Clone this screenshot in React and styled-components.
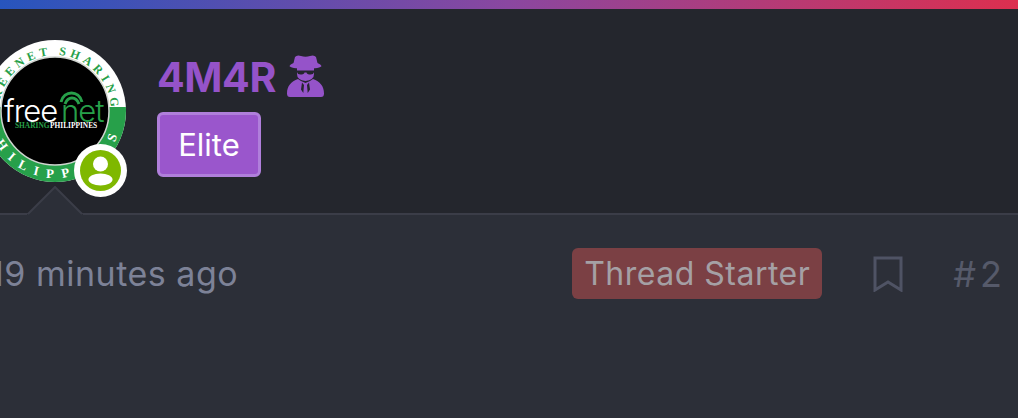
import React from "react";
import styled, { createGlobalStyle } from "styled-components";

const Global = createGlobalStyle`
  html, body { margin: 0; padding: 0; width: 1018px; height: 418px; overflow: hidden; background: #2c2f38; }
  * { box-sizing: border-box; }
`;
const Page = styled.div`
  width: 1018px; height: 418px; overflow: hidden;
  font-family: "Inter", "Open Sans", sans-serif;
  background: #2c2f38;
`;
const TopBar = styled.div`
  height: 9px;
  background: linear-gradient(90deg, #2755bd 0%, #8a47a0 50%, #dc2f4f 100%);
`;
const Header = styled.header`
  position: relative;
  height: 206px;
  background: #24262d;
  border-bottom: 2px solid #3b3d48;
  display: flex;
  align-items: flex-start;
  gap: 31px;
  padding: 31px 0 0 0;
`;
const AvatarWrap = styled.div`
  position: relative;
  flex: none;
  width: 142px;
  height: 142px;
  margin-left: -16px;
`;
const StatusBadge = styled.div`
  position: absolute;
  left: 90px;
  top: 104px;
  width: 53px;
  height: 53px;
  border-radius: 50%;
  background: #fff;
  display: flex;
  align-items: center;
  justify-content: center;
`;
const Caret = styled.svg`
  position: absolute;
  left: 27px;
  bottom: -2px;
  display: block;
`;
const UserInfo = styled.div`
  display: flex;
  flex-direction: column;
  align-items: flex-start;
  gap: 11px;
  padding-top: 14px;
`;
const NameRow = styled.div`
  display: flex;
  align-items: center;
  gap: 11px;
  height: 47px;
`;
const Name = styled.span`
  font-weight: 700;
  font-size: 41px;
  line-height: 47px;
  letter-spacing: -0.4px;
  color: #9553c9;
`;
const SecretIcon = styled.svg`
  display: block;
  flex: none;
  margin-top: -3px;
`;
const Role = styled.div`
  width: 104px;
  height: 65px;
  display: flex;
  align-items: center;
  justify-content: center;
  background: #9a56cc;
  border: 3px solid #b07fdb;
  border-radius: 6px;
  color: #fff;
  font-size: 31px;
`;
const Meta = styled.div`
  display: flex;
  align-items: center;
  height: 51px;
  margin-top: 33px;
  margin-left: -10px;
  padding-right: 12px;
`;
const Time = styled.span`
  font-size: 34px;
  letter-spacing: 0.5px;
  color: #7d8297;
  margin-right: auto;
  white-space: nowrap;
`;
const Starter = styled.span`
  width: 250px;
  height: 51px;
  display: flex;
  align-items: center;
  justify-content: center;
  background: #7b4044;
  border-radius: 6px;
  color: #a5a0a5;
  font-size: 32px;
  letter-spacing: 0.5px;
  white-space: nowrap;
`;
const Bookmark = styled.svg`
  margin-left: 51px;
  display: block;
  flex: none;
`;
const PostNumber = styled.span`
  margin-left: 50px;
  font-size: 36px;
  letter-spacing: 4px;
  color: #565a6a;
`;

const Logo = () => (
  <svg width="142" height="142" viewBox="0 0 142 142">
    <defs>
      <path id="ringTop" d="M 15 71 A 56 56 0 0 1 127 71" />
      <path id="ringBottom" d="M 4 71 A 67 67 0 0 0 138 71" />
      <clipPath id="lowerHalf"><rect x="0" y="67" width="142" height="75" /></clipPath>
    </defs>
    <circle cx="71" cy="71" r="71" fill="#fff" />
    <circle cx="71" cy="71" r="71" fill="#27a04a" clipPath="url(#lowerHalf)" />
    <circle cx="71" cy="71" r="54" fill="#000" stroke="#cfd4cf" strokeWidth="1.5" />
    <text fontFamily="Liberation Serif, serif" fontWeight="700" fontSize="12" fill="#27a04a" letterSpacing="4" textAnchor="middle">
      <textPath href="#ringTop" startOffset="50%">FREENET SHARING</textPath>
    </text>
    <text fontFamily="Liberation Serif, serif" fontWeight="700" fontSize="13" fill="#fff" letterSpacing="8.5" textAnchor="middle">
      <textPath href="#ringBottom" startOffset="50%">PHILIPPINES</textPath>
    </text>
    <path d="M77 62 C80 50 95 50 98 62 M81 64 C84 56 92 56 95 64" fill="none" stroke="#27a04a" strokeWidth="3" />
    <text x="20" y="82" fontFamily="Inter, sans-serif" fontWeight="300" fontSize="31" fill="#fff" letterSpacing="-1">free</text>
    <text x="77" y="82" fontFamily="Inter, sans-serif" fontWeight="300" fontSize="31" fill="#27a04a" letterSpacing="-1">net</text>
    <text x="31" y="88" fontFamily="Liberation Serif, serif" fontWeight="700" fontSize="7.4" fill="#27a04a">SHARING</text>
    <text x="66" y="88" fontFamily="Liberation Serif, serif" fontWeight="700" fontSize="7.4" fill="#fff">PHILIPPINES</text>
  </svg>
);

const StatusIcon = () => (
  <svg width="41" height="41" viewBox="0 0 41 41">
    <circle cx="20.5" cy="20.5" r="20.5" fill="#7fb800" />
    <circle cx="20.5" cy="14" r="7.5" fill="#fff" />
    <ellipse cx="20.5" cy="29.5" rx="12" ry="6" fill="#fff" />
  </svg>
);

const Secret = () => (
  <SecretIcon width="37" height="42" viewBox="0 0 37 42">
    <g fill="#9553c9">
      <path d="M8 2 Q10 -0.5 14 1 Q18.5 2.5 23 1 Q27 -0.5 29 2 L30.5 8 Q34 9.5 34.5 11 Q34 13.5 18.5 13.5 Q3 13.5 2.5 11 Q3 9.5 6.5 8 Z" />
      <path d="M10 13 H27 V19 Q27 25 18.5 26 Q10 25 10 19 Z" />
      <path d="M3 42 Q0 42 0 38.5 C0 31 4 26.5 11 24 L14 26 L18.5 28 L23 26 L26 24 C33 26.5 37 31 37 38.5 Q37 42 34 42 Z" />
    </g>
    <path d="M10 15.5 H27 V17 Q26.5 19.5 23.5 19.5 Q20 19.5 19.5 17.5 H17.5 Q17 19.5 13.5 19.5 Q10.5 19.5 10 17 Z" fill="#24262d" />
    <path d="M15 27.5 L17 30 L16.3 38 L14 34.5 Z M22 27.5 L20 30 L20.7 38 L23 34.5 Z" fill="#24262d" />
  </SecretIcon>
);

export default function App() {
  return (
    <Page>
      <Global />
      <TopBar />
      <Header>
        <AvatarWrap>
          <Logo />
          <StatusBadge><StatusIcon /></StatusBadge>
        </AvatarWrap>
        <UserInfo>
          <NameRow>
            <Name>4M4R</Name>
            <Secret />
          </NameRow>
          <Role>Elite</Role>
        </UserInfo>
        <Caret width="56" height="29" viewBox="0 0 56 29">
          <path d="M0 28 L1 28 L28 1 L55 28 L56 28 L56 29 L0 29 Z" fill="#2c2f38" />
          <path d="M1 28 L28 1 L55 28" fill="none" stroke="#3b3d48" strokeWidth="2" />
        </Caret>
      </Header>
      <Meta>
        <Time>19 minutes ago</Time>
        <Starter>Thread Starter</Starter>
        <Bookmark width="30" height="36" viewBox="0 0 30 36">
          <path d="M2 2 H28 V34 L15 26 L2 34 Z" fill="none" stroke="#4f5364" strokeWidth="3" />
        </Bookmark>
        <PostNumber>#2</PostNumber>
      </Meta>
    </Page>
  );
}
